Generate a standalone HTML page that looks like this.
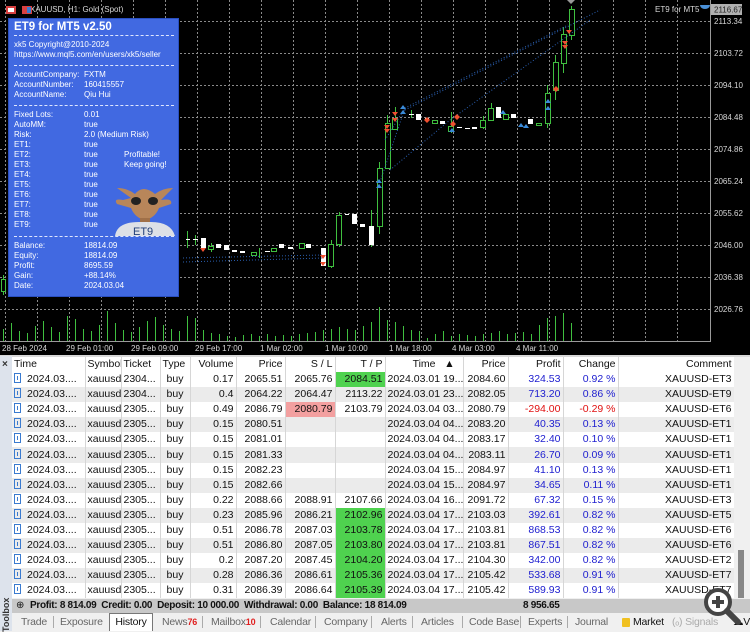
<!DOCTYPE html>
<html><head><meta charset="utf-8"><style>
*{margin:0;padding:0;box-sizing:border-box}
body{width:750px;height:631px;overflow:hidden;background:#f0f0f0;font-family:"Liberation Sans",sans-serif;position:relative}
#chart{position:absolute;left:0;top:0;width:750px;height:356px;background:#000}
#panel{position:absolute;left:8px;top:18px;width:171px;height:279px;background:#4169e1;color:#fff;font-size:8px;line-height:10px;border:1px solid #2a4fc0}
#panel .t{position:absolute;left:5px;top:1px;font-size:11.5px;font-weight:bold;line-height:14px}
#panel .l{position:absolute;left:5px;white-space:nowrap}
#panel .v{position:absolute;left:75px;white-space:nowrap}
#panel .s{position:absolute;left:5px;width:160px;border-top:1px dashed #dfe6ff;height:0}
#gut{position:absolute;left:0;top:356px;width:12px;height:275px;background:#dde3ec}
#tbl{position:absolute;left:12px;top:357px;width:722px;border-collapse:collapse;table-layout:fixed;font-size:10.5px;color:#111}
#tbl td{height:15.1px;padding:0 2px;white-space:nowrap;overflow:hidden;border-right:1px solid #d6d6d6;line-height:15px}
#tbl tr.h td{background:#fff;height:15px}
#tbl tr:nth-child(odd):not(.h) td{background:#ebebeb}
#tbl tr:nth-child(even) td{background:#fff}
.r{text-align:right}.c{text-align:center}
.b{color:#2020d0}.rd{color:#e01010}
td.g{background:#4fd24f!important}td.p{background:#f3a0a0!important}
.ic{display:inline-block;width:7px;height:10px;border:1px solid #3a7bd0;vertical-align:-1px;margin-right:6px;position:relative}
.ic:after{content:"";position:absolute;left:2px;top:2px;width:1px;height:4px;border-left:1px solid #3a7bd0}
#rs{position:absolute;left:734px;top:357px;width:16px;height:242px;background:#f0f0f0}
#sum{position:absolute;left:12px;top:599px;width:738px;height:14px;background:#c8c8c8;font-size:10px;letter-spacing:-0.3px;font-weight:bold;line-height:14px;color:#111;white-space:nowrap}
#tabs{position:absolute;left:12px;top:613px;width:738px;height:18px;background:#f0f0f0;font-size:10.5px;letter-spacing:-0.2px;color:#666;line-height:18px;white-space:nowrap;overflow:hidden}
#tabs span{position:absolute;top:0}
.sep{width:1px;height:12px;background:#aaa;top:3px!important}
</style></head><body>
<div id="chart">
<svg width="750" height="356" style="position:absolute;left:0;top:0">
<g stroke="#8a8a8a" stroke-width="1" stroke-dasharray="2,2">
<path d="M0 21.5H710M0 53.5H710M0 85.5H710M0 117.5H710M0 149.5H710M0 181.5H710M0 213.5H710M0 245.5H710M0 277.5H710M0 309.5H710"/>
<path d="M5.5 0V341M37.5 0V341M69.5 0V341M101.5 0V341M133.5 0V341M165.5 0V341M197.5 0V341M229.5 0V341M261.5 0V341M293.5 0V341M325.5 0V341M357.5 0V341M389.5 0V341M421.5 0V341M453.5 0V341M485.5 0V341M517.5 0V341M549.5 0V341M581.5 0V341M613.5 0V341M645.5 0V341M677.5 0V341"/>
</g>
<path d="M0 341.5H710.5V0" stroke="#9a9a9a" fill="none"/>
<g stroke="#3fbf3f" stroke-width="1">
<path d="M3.5 341V329M11.5 341V323M19.5 341V331M27.5 341V333M35.5 341V326M43.5 341V321M51.5 341V327M59.5 341V332M67.5 341V316M75.5 341V319M83.5 341V329M91.5 341V331M99.5 341V325M107.5 341V311M115.5 341V323M123.5 341V330M131.5 341V332M139.5 341V327M147.5 341V321M155.5 341V317M163.5 341V325M171.5 341V329M179.5 341V331M187.5 341V316M195.5 341V318M203.5 341V330M211.5 341V333M219.5 341V334M227.5 341V336M235.5 341V337M243.5 341V335M251.5 341V334M259.5 341V336M267.5 341V334M275.5 341V336M283.5 341V335M291.5 341V336M299.5 341V334M307.5 341V333M315.5 341V332M323.5 341V330M331.5 341V329M339.5 341V327M347.5 341V329M355.5 341V330M363.5 341V326M371.5 341V322M379.5 341V307M387.5 341V320M395.5 341V322M403.5 341V326M411.5 341V330M419.5 341V331M427.5 341V338M435.5 341V334M443.5 341V331M451.5 341V336M459.5 341V334M467.5 341V335M475.5 341V336M483.5 341V334M491.5 341V333M499.5 341V331M507.5 341V334M515.5 341V333M523.5 341V332M531.5 341V334M539.5 341V325M547.5 341V318M555.5 341V316M563.5 341V313M571.5 341V323"/>
</g>
<g stroke="#3fbf3f" fill="#000" stroke-width="1">
<path d="M3.5 275V295M187.5 231V248M195.5 235V245M211.5 243V252M259.5 248V258M331.5 240V268M339.5 212V247M371.5 210V247M379.5 162V234M387.5 115V168M395.5 107V124M411.5 110V118M451.5 112V133M483.5 116V129M491.5 103V121M547.5 85V128M555.5 55V100M563.5 27V73M571.5 6V40"/>
<rect x="1.5" y="279.5" width="4" height="12"/>
<rect x="208.5" y="246.5" width="5" height="3"/><rect x="251.5" y="252.5" width="5" height="3"/><rect x="271.5" y="248.5" width="5" height="3"/><rect x="299.5" y="243.5" width="5" height="5"/>
<rect x="328.5" y="244.5" width="5" height="22"/><rect x="336.5" y="215.5" width="5" height="29"/>
<rect x="377.5" y="168.5" width="5" height="58"/><rect x="385.5" y="123.5" width="5" height="45"/>
<rect x="392.5" y="118.5" width="5" height="11"/><rect x="432.5" y="120.5" width="5" height="3"/><rect x="448.5" y="126.5" width="5" height="5"/>
<rect x="480.5" y="120.5" width="5" height="7"/><rect x="488.5" y="108.5" width="5" height="12"/><rect x="503.5" y="114.5" width="5" height="5"/>
<rect x="536.5" y="123.5" width="5" height="2"/><rect x="545.5" y="93.5" width="5" height="30"/><rect x="553.5" y="62.5" width="5" height="28"/><rect x="561.5" y="34.5" width="5" height="29"/><rect x="569.5" y="9.5" width="5" height="26"/>
</g>
<g fill="#fff">
<rect x="186" y="239" width="4" height="1"/><rect x="193" y="239" width="5" height="1"/>
<rect x="201" y="238" width="5" height="10"/><rect x="216" y="244" width="5" height="4"/><rect x="224" y="245" width="5" height="5"/><rect x="232" y="250" width="5" height="2"/><rect x="240" y="251" width="5" height="2"/><rect x="265" y="251" width="5" height="1"/><rect x="279" y="244" width="5" height="4"/><rect x="288" y="247" width="5" height="2"/><rect x="306" y="244" width="5" height="4"/><rect x="321" y="248" width="5" height="18"/>
<rect x="345" y="214" width="4" height="1"/><rect x="352" y="214" width="5" height="10"/><rect x="360" y="224" width="5" height="3"/><rect x="369" y="226" width="5" height="19"/>
<rect x="409" y="114" width="5" height="1"/><rect x="416" y="114" width="5" height="6"/><rect x="425" y="118" width="4" height="1"/><rect x="440" y="121" width="5" height="3"/><rect x="457" y="127" width="5" height="1"/><rect x="465" y="128" width="5" height="1"/><rect x="472" y="127" width="5" height="2"/><rect x="496" y="107" width="5" height="11"/><rect x="511" y="114" width="5" height="4"/><rect x="528" y="119" width="5" height="5"/>
</g>
<g stroke="#2a5fb0" stroke-width="1" stroke-dasharray="1,2" fill="none">
<path d="M183 262L323 258M183 258L323 255M379 185L405 108L568 25M385 140L405 108M390 170L450 120L590 20M405 110L600 10"/>
</g>
<g fill="#f05030">
<path d="M200 248h6l-3 4z"/><path d="M320 255h6l-3 4zM320 262h6l-3 4z"/><path d="M384 125h6l-3 4zM384 129h6l-3 4zM392 112h6l-3 4zM392 118h6l-3 4z"/><path d="M424 120l3-3 3 3-3 3z"/><path d="M454 117l3-3 3 3-3 3zM450 124l3-3 3 3-3 3z"/><path d="M562 41h6l-3 4zM562 45h6l-3 4zM553 89l3-3 3 3-3 3z"/><path d="M566 30h6l-3 4z"/>
</g>
<g fill="#3a8ad8">
<path d="M376 188l3-4 3 4zM376 183l3-4 3 4z"/><path d="M400 114l3-4 3 4zM400 109l3-4 3 4z"/><path d="M449 132l3-4 3 4zM500 114l3-4 3 4zM518 127l3-4 3 4zM523 128l3-4 3 4zM545 103l3-4 3 4zM545 110l3-4 3 4z"/>
</g>
<rect x="711" y="4" width="31" height="11" fill="#b0b0b0"/>
<g font-family="Liberation Sans" font-size="8" fill="#d8d8d8">
<text x="714" y="12.5" fill="#222">2116.67</text>
<text x="714" y="24">2113.34</text><text x="714" y="56">2103.72</text><text x="714" y="88">2094.10</text><text x="714" y="120">2084.48</text><text x="714" y="152">2074.86</text><text x="714" y="184">2065.24</text><text x="714" y="216">2055.62</text><text x="714" y="248">2046.00</text><text x="714" y="280">2036.38</text><text x="714" y="312">2026.76</text>
<text x="655" y="12">ET9 for MT5</text>
<text x="30" y="12">XAUUSD, H1:  Gold (Spot)</text>
<text x="2" y="351">28 Feb 2024</text><text x="66" y="351">29 Feb 01:00</text><text x="131" y="351">29 Feb 09:00</text><text x="195" y="351">29 Feb 17:00</text><text x="260" y="351">1 Mar 02:00</text><text x="325" y="351">1 Mar 10:00</text><text x="389" y="351">1 Mar 18:00</text><text x="452" y="351">4 Mar 03:00</text><text x="516" y="351">4 Mar 11:00</text>
</g>
<rect x="6" y="6" width="10" height="8" fill="#d84040"/><rect x="8" y="8" width="6" height="4" fill="#fff"/>
<rect x="22" y="6" width="10" height="8" fill="#d84040"/><rect x="27" y="7" width="4" height="6" fill="#3a7bd0"/>
<path d="M700 5a5 4 0 1 0 10 0" fill="#4a90d8"/>
<path d="M567 0l4 4 4-4z" fill="#999"/>
</svg>
<div id="panel">
<div class="t">ET9 for MT5 v2.50</div>
<div class="s" style="top:16px"></div>
<div class="l" style="top:21px">xk5 Copyright@2010-2024</div>
<div class="l" style="top:31px">https://www.mql5.com/en/users/xk5/seller</div>
<div class="s" style="top:46px"></div>
<div class="l" style="top:51px">AccountCompany:</div><div class="v" style="top:51px">FXTM</div>
<div class="l" style="top:61px">AccountNumber:</div><div class="v" style="top:61px">160415557</div>
<div class="l" style="top:71px">AccountName:</div><div class="v" style="top:71px">Qiu Hui</div>
<div class="s" style="top:86px"></div>
<div class="l" style="top:91px">Fixed Lots:</div><div class="v" style="top:91px">0.01</div>
<div class="l" style="top:101px">AutoMM:</div><div class="v" style="top:101px">true</div>
<div class="l" style="top:111px">Risk:</div><div class="v" style="top:111px">2.0 (Medium Risk)</div>
<div class="l" style="top:121px">ET1:</div><div class="v" style="top:121px">true</div>
<div class="l" style="top:131px">ET2:</div><div class="v" style="top:131px">true</div>
<div class="l" style="top:141px">ET3:</div><div class="v" style="top:141px">true</div>
<div class="l" style="top:151px">ET4:</div><div class="v" style="top:151px">true</div>
<div class="l" style="top:161px">ET5:</div><div class="v" style="top:161px">true</div>
<div class="l" style="top:171px">ET6:</div><div class="v" style="top:171px">true</div>
<div class="l" style="top:181px">ET7:</div><div class="v" style="top:181px">true</div>
<div class="l" style="top:191px">ET8:</div><div class="v" style="top:191px">true</div>
<div class="l" style="top:201px">ET9:</div><div class="v" style="top:201px">true</div>
<div class="l" style="top:131px;left:115px">Profitable!</div>
<div class="l" style="top:141px;left:115px">Keep going!</div>
<svg style="position:absolute;left:104px;top:155px" width="64" height="62">
<path d="M4 30Q0 24 10 26L18 24L4 14Q14 14 22 20Q30 10 42 20Q50 14 60 14L48 26Q60 24 58 30L46 34Q42 44 32 46Q22 44 18 34Z" fill="#b8865a"/>
<ellipse cx="23" cy="27" rx="5" ry="4" fill="#222"/><ellipse cx="40" cy="27" rx="5" ry="4" fill="#222"/>
<path d="M27 44h10v6h-10z" fill="#a07048"/>
<path d="M2 62Q4 48 26 48h12Q58 48 62 62z" fill="#dde0e6"/>
<text x="20" y="61" font-family="Liberation Sans" font-size="11" fill="#23407a">ET9</text>
</svg>
<div class="s" style="top:217px"></div>
<div class="l" style="top:222px">Balance:</div><div class="v" style="top:222px">18814.09</div>
<div class="l" style="top:232px">Equity:</div><div class="v" style="top:232px">18814.09</div>
<div class="l" style="top:242px">Profit:</div><div class="v" style="top:242px">8695.59</div>
<div class="l" style="top:252px">Gain:</div><div class="v" style="top:252px">+88.14%</div>
<div class="l" style="top:262px">Date:</div><div class="v" style="top:262px">2024.03.04</div>
</div>
</div>
<div style="position:absolute;left:0;top:355px;width:750px;height:2px;background:#d8d8d8"></div>
<div id="gut"><div style="position:absolute;left:2px;top:3px;font-size:10px;font-weight:bold;color:#333">×</div>
<div style="position:absolute;left:-13px;top:252px;transform:rotate(-90deg);font-size:9px;font-weight:bold;color:#333;width:38px">Toolbox</div></div>
<table id="tbl">
<colgroup><col style="width:73px"><col style="width:36px"><col style="width:39px"><col style="width:30px"><col style="width:46px"><col style="width:49px"><col style="width:50px"><col style="width:50px"><col style="width:78px"><col style="width:45px"><col style="width:55px"><col style="width:55px"><col style="width:116px"></colgroup>
<tr class="h"><td>Time</td><td class="r">Symbol</td><td>Ticket</td><td>Type</td><td class="r">Volume</td><td class="r">Price</td><td class="r">S / L</td><td class="r">T / P</td><td class="r">Time &nbsp;&nbsp;▲&nbsp;&nbsp;</td><td class="r">Price</td><td class="r">Profit</td><td class="r">Change</td><td class="r">Comment</td></tr>
<tr><td><i class="ic"></i>2024.03....</td><td class="r">xauusd</td><td>2304...</td><td class="c">buy</td><td class="r">0.17</td><td class="r">2065.51</td><td class="r">2065.76</td><td class="r g">2084.51</td><td>2024.03.01 19...</td><td class="r">2084.60</td><td class="r b">324.53</td><td class="r b">0.92 %</td><td class="r">XAUUSD-ET3</td></tr>
<tr><td><i class="ic"></i>2024.03....</td><td class="r">xauusd</td><td>2304...</td><td class="c">buy</td><td class="r">0.4</td><td class="r">2064.22</td><td class="r">2064.47</td><td class="r">2113.22</td><td>2024.03.01 23...</td><td class="r">2082.05</td><td class="r b">713.20</td><td class="r b">0.86 %</td><td class="r">XAUUSD-ET9</td></tr>
<tr><td><i class="ic"></i>2024.03....</td><td class="r">xauusd</td><td>2305...</td><td class="c">buy</td><td class="r">0.49</td><td class="r">2086.79</td><td class="r p">2080.79</td><td class="r">2103.79</td><td>2024.03.04 03...</td><td class="r">2080.79</td><td class="r rd">-294.00</td><td class="r rd">-0.29 %</td><td class="r">XAUUSD-ET6</td></tr>
<tr><td><i class="ic"></i>2024.03....</td><td class="r">xauusd</td><td>2305...</td><td class="c">buy</td><td class="r">0.15</td><td class="r">2080.51</td><td></td><td></td><td>2024.03.04 04...</td><td class="r">2083.20</td><td class="r b">40.35</td><td class="r b">0.13 %</td><td class="r">XAUUSD-ET1</td></tr>
<tr><td><i class="ic"></i>2024.03....</td><td class="r">xauusd</td><td>2305...</td><td class="c">buy</td><td class="r">0.15</td><td class="r">2081.01</td><td></td><td></td><td>2024.03.04 04...</td><td class="r">2083.17</td><td class="r b">32.40</td><td class="r b">0.10 %</td><td class="r">XAUUSD-ET1</td></tr>
<tr><td><i class="ic"></i>2024.03....</td><td class="r">xauusd</td><td>2305...</td><td class="c">buy</td><td class="r">0.15</td><td class="r">2081.33</td><td></td><td></td><td>2024.03.04 04...</td><td class="r">2083.11</td><td class="r b">26.70</td><td class="r b">0.09 %</td><td class="r">XAUUSD-ET1</td></tr>
<tr><td><i class="ic"></i>2024.03....</td><td class="r">xauusd</td><td>2305...</td><td class="c">buy</td><td class="r">0.15</td><td class="r">2082.23</td><td></td><td></td><td>2024.03.04 15...</td><td class="r">2084.97</td><td class="r b">41.10</td><td class="r b">0.13 %</td><td class="r">XAUUSD-ET1</td></tr>
<tr><td><i class="ic"></i>2024.03....</td><td class="r">xauusd</td><td>2305...</td><td class="c">buy</td><td class="r">0.15</td><td class="r">2082.66</td><td></td><td></td><td>2024.03.04 15...</td><td class="r">2084.97</td><td class="r b">34.65</td><td class="r b">0.11 %</td><td class="r">XAUUSD-ET1</td></tr>
<tr><td><i class="ic"></i>2024.03....</td><td class="r">xauusd</td><td>2305...</td><td class="c">buy</td><td class="r">0.22</td><td class="r">2088.66</td><td class="r">2088.91</td><td class="r">2107.66</td><td>2024.03.04 16...</td><td class="r">2091.72</td><td class="r b">67.32</td><td class="r b">0.15 %</td><td class="r">XAUUSD-ET3</td></tr>
<tr><td><i class="ic"></i>2024.03....</td><td class="r">xauusd</td><td>2305...</td><td class="c">buy</td><td class="r">0.23</td><td class="r">2085.96</td><td class="r">2086.21</td><td class="r g">2102.96</td><td>2024.03.04 17...</td><td class="r">2103.03</td><td class="r b">392.61</td><td class="r b">0.82 %</td><td class="r">XAUUSD-ET5</td></tr>
<tr><td><i class="ic"></i>2024.03....</td><td class="r">xauusd</td><td>2305...</td><td class="c">buy</td><td class="r">0.51</td><td class="r">2086.78</td><td class="r">2087.03</td><td class="r g">2103.78</td><td>2024.03.04 17...</td><td class="r">2103.81</td><td class="r b">868.53</td><td class="r b">0.82 %</td><td class="r">XAUUSD-ET6</td></tr>
<tr><td><i class="ic"></i>2024.03....</td><td class="r">xauusd</td><td>2305...</td><td class="c">buy</td><td class="r">0.51</td><td class="r">2086.80</td><td class="r">2087.05</td><td class="r g">2103.80</td><td>2024.03.04 17...</td><td class="r">2103.81</td><td class="r b">867.51</td><td class="r b">0.82 %</td><td class="r">XAUUSD-ET6</td></tr>
<tr><td><i class="ic"></i>2024.03....</td><td class="r">xauusd</td><td>2305...</td><td class="c">buy</td><td class="r">0.2</td><td class="r">2087.20</td><td class="r">2087.45</td><td class="r g">2104.20</td><td>2024.03.04 17...</td><td class="r">2104.30</td><td class="r b">342.00</td><td class="r b">0.82 %</td><td class="r">XAUUSD-ET2</td></tr>
<tr><td><i class="ic"></i>2024.03....</td><td class="r">xauusd</td><td>2305...</td><td class="c">buy</td><td class="r">0.28</td><td class="r">2086.36</td><td class="r">2086.61</td><td class="r g">2105.36</td><td>2024.03.04 17...</td><td class="r">2105.42</td><td class="r b">533.68</td><td class="r b">0.91 %</td><td class="r">XAUUSD-ET7</td></tr>
<tr><td><i class="ic"></i>2024.03....</td><td class="r">xauusd</td><td>2305...</td><td class="c">buy</td><td class="r">0.31</td><td class="r">2086.39</td><td class="r">2086.64</td><td class="r g">2105.39</td><td>2024.03.04 17...</td><td class="r">2105.42</td><td class="r b">589.93</td><td class="r b">0.91 %</td><td class="r">XAUUSD-ET7</td></tr>
</table>
<div id="rs"><div style="position:absolute;left:4px;top:193px;width:6px;height:48px;background:#888"></div></div>
<div id="sum"><span style="position:absolute;left:4px;font-weight:normal">⊕</span><span style="position:absolute;left:18px">Profit: 8 814.09 &nbsp;Credit: 0.00 &nbsp;Deposit: 10 000.00 &nbsp;Withdrawal: 0.00 &nbsp;Balance: 18 814.09</span><span style="position:absolute;left:511px">8 956.65</span></div>
<div id="tabs">
<span style="left:9px">Trade</span><span class="sep" style="left:41px"></span>
<span style="left:48px">Exposure</span>
<span style="left:97px;top:0;height:18px;width:44px;background:#fff;border:1px solid #777;border-bottom:none;color:#111;text-align:center;line-height:16px">History</span>
<span style="left:150px">News<b style="color:#e02020;font-size:9px">76</b></span><span class="sep" style="left:190px"></span>
<span style="left:199px">Mailbox<b style="color:#e02020;font-size:9px">10</b></span><span class="sep" style="left:248px"></span>
<span style="left:258px">Calendar</span><span class="sep" style="left:303px"></span>
<span style="left:312px">Company</span><span class="sep" style="left:359px"></span>
<span style="left:369px">Alerts</span><span class="sep" style="left:400px"></span>
<span style="left:409px">Articles</span><span class="sep" style="left:450px"></span>
<span style="left:457px">Code Base</span><span class="sep" style="left:508px"></span>
<span style="left:516px">Experts</span><span class="sep" style="left:555px"></span>
<span style="left:563px">Journal</span>
<span style="left:610px;top:5px;width:8px;height:9px;background:#f0c020;border-radius:1px"></span>
<span style="left:621px;color:#111">Market</span>
<span style="left:660px;color:#aaa">(ₒ) Signals</span>
<span style="left:721px;color:#111">☁VP</span>
</div>
<svg style="position:absolute;left:700px;top:585px" width="48" height="42"><circle cx="18" cy="17" r="12" fill="#fff" stroke="#444" stroke-width="4"/><path d="M12 17h12M18 11v12" stroke="#444" stroke-width="4"/><path d="M27 26l11 11" stroke="#444" stroke-width="6" stroke-linecap="round"/></svg>
</body></html>
